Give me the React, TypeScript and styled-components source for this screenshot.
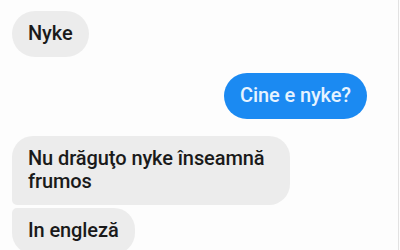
import React from "react";
import styled, { createGlobalStyle } from "styled-components";

const Global = createGlobalStyle`
  html, body {
    margin: 0;
    padding: 0;
    background: #fdfdfd;
  }
  body {
    font-family: Roboto, "Noto Sans", Arial, sans-serif;
  }
`;

const Screen = styled.div`
  width: 399px;
  height: 250px;
  overflow: hidden;
  background: #fdfdfd;
  border-right: 1px solid #e2e2e2;
  display: flex;
  flex-direction: column;
  padding-top: 11px;
  box-sizing: border-box;
`;

const Row = styled.div<{ $mine?: boolean; $gap: number }>`
  display: flex;
  justify-content: ${(p) => (p.$mine ? "flex-end" : "flex-start")};
  padding: 0 ${(p) => (p.$mine ? "31px" : "0")} 0 ${(p) => (p.$mine ? "0" : "12px")};
  margin-bottom: ${(p) => p.$gap}px;
`;

type Pos = "single" | "first" | "last";

const radius = (pos: Pos) => {
  if (pos === "first") return "21px 21px 21px 5px";
  if (pos === "last") return "5px 21px 21px 21px";
  return "23px";
};

const Bubble = styled.div<{ $mine?: boolean; $pos: Pos }>`
  background: ${(p) => (p.$mine ? "#1b8af2" : "#ececec")};
  color: ${(p) => (p.$mine ? "#e6f3ff" : "#1a1a1a")};
  font-size: 20px;
  font-weight: 500;
  line-height: 23px;
  letter-spacing: -0.1px;
  padding: 11px 16px 12px 16px;
  border-radius: ${(p) => radius(p.$pos)};
  max-width: 246px;
  white-space: normal;
`;

export default function App() {
  return (
    <>
      <Global />
      <Screen>
        <Row $gap={16}>
          <Bubble $pos="single">Nyke</Bubble>
        </Row>
        <Row $mine $gap={17}>
          <Bubble $mine $pos="single">Cine e nyke?</Bubble>
        </Row>
        <Row $gap={3}>
          <Bubble $pos="first">Nu drăguţo nyke înseamnă frumos</Bubble>
        </Row>
        <Row $gap={0}>
          <Bubble $pos="last">In engleză</Bubble>
        </Row>
      </Screen>
    </>
  );
}
